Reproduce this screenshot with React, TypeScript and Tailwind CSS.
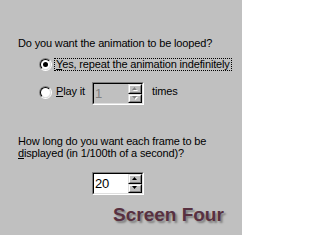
import React from "react";

function Radio({ checked }: { checked?: boolean }) {
  return (
    <div className="w-[13px] h-[13px] shrink-0 rounded-full border border-t-[#808080] border-l-[#808080] border-r-white border-b-white">
      <div className="w-full h-full rounded-full border border-t-black border-l-black border-r-[#dfdfdf] border-b-[#dfdfdf] bg-white flex items-center justify-center">
        {checked && <div className="w-[5px] h-[5px] rounded-full bg-black" />}
      </div>
    </div>
  );
}

function SpinBtn({ up, disabled }: { up?: boolean; disabled?: boolean }) {
  const pts = up ? "2.5,0 5,3 0,3" : "0,0 5,0 2.5,3";
  return (
    <div className="flex-1 border border-t-[#dfdfdf] border-l-[#dfdfdf] border-r-black border-b-black">
      <div className="w-full h-full bg-[#c0c0c0] border border-t-white border-l-white border-r-[#808080] border-b-[#808080] flex items-center justify-center">
        <svg width="6" height="4" viewBox="0 0 6 4" className="block">
          {disabled && <polygon points={pts} fill="#ffffff" transform="translate(1,1)" />}
          <polygon points={pts} fill={disabled ? "#808080" : "#000000"} />
        </svg>
      </div>
    </div>
  );
}

function Spin({ value, disabled }: { value: string; disabled?: boolean }) {
  return (
    <div className="w-[52px] h-[23px] shrink-0 border border-t-[#808080] border-l-[#808080] border-r-white border-b-white">
      <div
        className={
          disabled
            ? "h-full flex border border-t-black border-l-black border-r-[#dfdfdf] border-b-[#dfdfdf] bg-[#c0c0c0]"
            : "h-full flex border border-t-black border-l-black border-r-[#dfdfdf] border-b-[#dfdfdf] bg-white"
        }
      >
        <div
          className={
            disabled
              ? "flex-1 flex items-center pl-[1px] text-[13px] leading-[15px] text-[#808080]"
              : "flex-1 flex items-center pl-[1px] text-[13px] leading-[15px] text-black"
          }
        >
          {value}
        </div>
        <div className="w-[14px] flex flex-col">
          <SpinBtn up disabled={disabled} />
          <SpinBtn disabled={disabled} />
        </div>
      </div>
    </div>
  );
}

export default function App() {
  return (
    <div className="w-[242px] h-[235px] overflow-hidden bg-[#c0c0c0] text-black font-['Liberation_Sans',Arial,sans-serif] text-[11px] tracking-[-0.15px] pt-[37px] pl-[18px] flex flex-col">
      <div className="leading-[13px] h-[13px] whitespace-nowrap">Do you want the animation to be looped?</div>

      <div className="mt-[8px] flex items-center h-[13px] ml-[21px]">
        <Radio checked />
        <div className="ml-[2px] h-[13px] border border-dotted border-black pl-[1px] pr-[1px] leading-[11px] whitespace-nowrap">
          <span className="underline underline-offset-[1px]">Y</span>es, repeat the animation indefinitely
        </div>
      </div>

      <div className="mt-[11px] flex items-start ml-[21px]">
        <div className="mt-[4px]">
          <Radio />
        </div>
        <div className="ml-[4px] mt-[3px] w-[36px] leading-[13px] whitespace-nowrap">
          <span className="underline underline-offset-[1px]">P</span>lay it
        </div>
        <Spin value="1" disabled />
        <div className="ml-[8px] mt-[3px] leading-[13px]">times</div>
      </div>

      <div className="mt-[30px] leading-[12px]">
        <div className="whitespace-nowrap">How long do you want each frame to be</div>
        <div className="whitespace-nowrap">
          <span className="underline underline-offset-[1px]">d</span>isplayed (in 1/100th of a second)?
        </div>
      </div>

      <div className="mt-[13px] ml-[74px]">
        <Spin value="20" />
      </div>

      <div className="mt-[10px] ml-[95px] text-[19px] leading-[19px] font-bold tracking-normal text-[#583040] whitespace-nowrap [text-shadow:2px_2px_2px_rgba(0,0,0,0.35)]">
        Screen Four
      </div>
    </div>
  );
}
